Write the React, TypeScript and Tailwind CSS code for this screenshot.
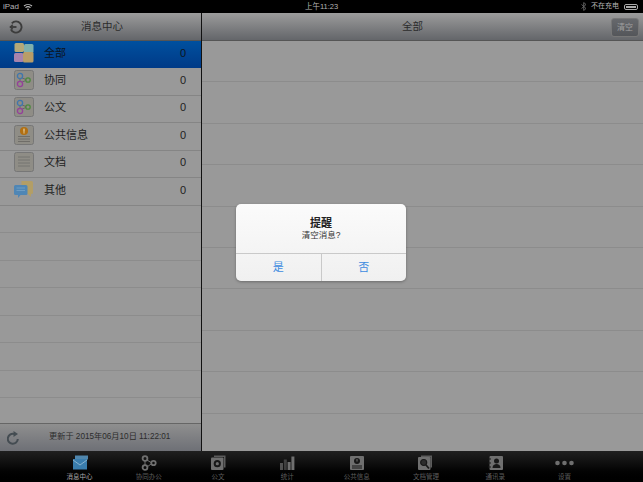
import type { ReactNode } from "react";

const cjk = { fontFamily: '"Liberation Sans", "Noto Sans CJK SC", sans-serif' };

function Frame({ children }: { children: ReactNode }) {
    return (
        <svg width="20" height="20" viewBox="0 0 20 20">
            <rect x="0.5" y="0.5" width="19" height="19" rx="2" fill="#8f8d86" stroke="#777" />
            {children}
        </svg>
    );
}

function FlowIcon() {
    return (
        <Frame>
            <path d="M6 7v6M6 7l7 3M6 13l7-3" stroke="#666" strokeWidth="1" fill="none" />
            <circle cx="6" cy="6" r="2.6" fill="#8f8d86" stroke="#3f76ad" strokeWidth="1.3" />
            <circle cx="6" cy="14" r="2.6" fill="#8f8d86" stroke="#94409a" strokeWidth="1.3" />
            <circle cx="14" cy="10" r="2.2" fill="#8f8d86" stroke="#4d8a3f" strokeWidth="1.3" />
        </Frame>
    );
}

function AllIcon() {
    return (
        <svg width="20" height="20" viewBox="0 0 20 20">
            <rect x="0.5" y="0" width="9.500" height="9" rx="1.500" fill="#b3a878" />
            <rect x="10" y="1" width="9.500" height="9" rx="1.500" fill="#7fb0ac" />
            <rect x="0" y="10" width="9.500" height="9" rx="1.500" fill="#a683ad" />
            <rect x="9" y="9" width="10.500" height="10.500" rx="1.500" fill="#b89d68" />
        </svg>
    );
}

function InfoIcon() {
    return (
        <Frame>
            <path d="M4 11.500h12M4 14h12M4 16.500h12" stroke="#6f6d68" />
            <circle cx="10" cy="6" r="4" fill="#b26f12" />
            <rect x="9.400" y="3.600" width="1.200" height="3.200" fill="#e6d3a8" />
            <rect x="9.400" y="7.300" width="1.200" height="1.100" fill="#e6d3a8" />
        </Frame>
    );
}

function DocIcon() {
    return (
        <Frame>
            <path d="M4 5h12M4 8h12M4 11h12M4 14h12" stroke="#747470" />
        </Frame>
    );
}

function OtherIcon() {
    return (
        <svg width="20" height="20" viewBox="0 0 20 20">
            <path d="M7.500 1h10a1.500 1.500 0 0 1 1.500 1.500v10a1.500 1.500 0 0 1-1.500 1.500h-.5v3l-3-3H7.500z" fill="#b39e66" />
            <path d="M1.500 5h10.500a1.500 1.500 0 0 1 1.500 1.500v7a1.500 1.500 0 0 1-1.500 1.500H6.500l-2.500 3v-3H1.500a1.500 1.500 0 0 1-1.500-1.500v-7A1.500 1.500 0 0 1 1.500 5z" fill="#4f86b5" />
            <path d="M2.500 8h8.500M2.500 10.500h8.500" stroke="#6f9dc3" />
        </svg>
    );
}

function Wifi() {
    return (
        <svg width="10" height="8" viewBox="0 0 10 8" fill="none" stroke="#bbb" strokeWidth="1.100">
            <path d="M1 3a6 6 0 0 1 8 0M2.500 4.700a3.700 3.700 0 0 1 5 0" />
            <path d="M5 7.500L3.800 6.100a1.800 1.800 0 0 1 2.400 0z" fill="#bbb" stroke="none" />
        </svg>
    );
}

function Bluetooth() {
    return (
        <svg width="6" height="9" viewBox="0 0 6 9" fill="none" stroke="#666" strokeWidth="0.900">
            <path d="M0.500 2.500l4.500 4-2.300 2V0.500l2.300 2-4.500 4" />
        </svg>
    );
}

function BackIcon() {
    return (
        <svg width="14" height="14" viewBox="0 0 15 15" fill="none" stroke="#3c3c3c" strokeWidth="2">
            <path d="M3 3.500A6 6 0 1 1 2 10" />
            <path d="M1 7.500h7" />
            <path d="M4 5L1.500 7.500 4 10" strokeWidth="1.600" />
        </svg>
    );
}

function RefreshIcon() {
    return (
        <svg width="13" height="14" viewBox="0 0 13 14" fill="none">
            <path d="M10.800 8A5 5 0 1 1 7 3" stroke="#444c52" strokeWidth="2" />
            <path d="M6.500 0l4.500 3-4.500 3z" fill="#444c52" />
        </svg>
    );
}

const gray = "#6f6f6f";

const tabs: { label: string; icon: ReactNode; active?: boolean }[] = [
    {
        label: "消息中心",
        active: true,
        icon: (
            <svg width="15" height="15" viewBox="0 0 15 15" className="ml-[2px]">
                <path d="M2 0.500h13v4H2z" fill="#4f86ad" />
                <rect x="0" y="4" width="14" height="10.500" fill="#3a7dad" />
                <path d="M0 5l7 5 7-5" fill="none" stroke="#9cc0d8" strokeWidth="0.800" />
            </svg>
        ),
    },
    {
        label: "协同办公",
        icon: (
            <svg width="16" height="16" viewBox="0 0 16 16" fill="none" stroke={gray} strokeWidth="1.800">
                <path d="M4 6v4M6 5l4 2.500M6 12l4-3" strokeWidth="1" />
                <circle cx="4" cy="3.500" r="2.400" />
                <circle cx="4" cy="12.500" r="2.400" />
                <circle cx="12.500" cy="8" r="2.200" />
            </svg>
        ),
    },
    {
        label: "公文",
        icon: (
            <svg width="15" height="15" viewBox="0 0 15 15">
                <path d="M3 0.500h11.500v12h-1.500v-10.500H3z" fill="#5c5c5c" />
                <rect x="0" y="2.500" width="12.500" height="12.500" rx="1" fill={gray} />
                <circle cx="6.300" cy="8.700" r="3.600" fill="#181818" />
                <circle cx="6.300" cy="8.700" r="1.600" fill={gray} />
            </svg>
        ),
    },
    {
        label: "统计",
        icon: (
            <svg width="15" height="14" viewBox="0 0 15 14" fill={gray}>
                <rect x="0" y="7" width="3" height="7" opacity="0.700" />
                <rect x="3.800" y="3.500" width="3" height="10.500" opacity="0.500" />
                <rect x="7.600" y="6" width="3" height="8" />
                <rect x="11.400" y="0.500" width="3" height="13.500" />
            </svg>
        ),
    },
    {
        label: "公共信息",
        icon: (
            <svg width="14" height="14" viewBox="0 0 14 14">
                <rect x="0" y="0" width="14" height="14" rx="1" fill={gray} />
                <circle cx="7" cy="5" r="3" fill="#181818" />
                <rect x="6.500" y="3" width="1" height="2.500" fill={gray} />
                <path d="M2 10h10M2 12h10" stroke="#181818" />
            </svg>
        ),
    },
    {
        label: "文档管理",
        icon: (
            <svg width="15" height="15" viewBox="0 0 15 15">
                <path d="M3 0.500h11v12h-1.500v-10.500H3z" fill="#5c5c5c" />
                <rect x="0" y="2" width="12.500" height="13" rx="1" fill={gray} />
                <circle cx="5.700" cy="7.500" r="3" fill="#2c2c2c" stroke="#181818" strokeWidth="1.200" />
                <path d="M8 10l3 3.500" stroke="#181818" strokeWidth="1.800" />
            </svg>
        ),
    },
    {
        label: "通讯录",
        icon: (
            <svg width="15" height="14" viewBox="0 0 15 14">
                <rect x="1.500" y="0" width="13.500" height="14" rx="1" fill={gray} />
                <path d="M0 3h3M0 7h3M0 11h3" stroke="#181818" strokeWidth="1" />
                <circle cx="8.500" cy="5" r="2.500" fill="#181818" />
                <path d="M4.500 12c0-3 2-4 4-4s4 1 4 4z" fill="#181818" />
            </svg>
        ),
    },
    {
        label: "设置",
        icon: (
            <svg width="19" height="6" viewBox="0 0 19 6" fill={gray}>
                <circle cx="2.500" cy="3" r="2.300" />
                <circle cx="9.500" cy="3" r="2.300" />
                <circle cx="16.500" cy="3" r="2.300" />
            </svg>
        ),
    },
];

const rows = [
    { name: "全部", icon: <AllIcon />, active: true },
    { name: "协同", icon: <FlowIcon /> },
    { name: "公文", icon: <FlowIcon /> },
    { name: "公共信息", icon: <InfoIcon /> },
    { name: "文档", icon: <DocIcon /> },
    { name: "其他", icon: <OtherIcon /> },
];

export default function App() {
    return (
        <div className="relative flex flex-col w-[643px] h-[482px] overflow-hidden bg-[#999999]" style={cjk}>
            <div className="flex items-center justify-between h-[13px] px-[3px] bg-black text-[#b5b5b5] text-[8px] shrink-0">
                <div className="flex items-center gap-[4px] w-[200px]">
                    <span>iPad</span>
                    <Wifi />
                </div>
                <span className="text-[7.500px]">上午11:23</span>
                <div className="flex items-center justify-end gap-[4px] w-[200px]">
                    <Bluetooth />
                    <span className="text-[7px]">不在充电</span>
                    <div className="w-[14px] h-[6px] rounded-[2px] border border-[#aaa] p-[1px] ml-[1px] mr-[2px]">
                        <div className="h-full w-full bg-[#aaa]" />
                    </div>
                </div>
            </div>

            <div className="flex flex-1 min-h-0">
                <div className="flex flex-col w-[201px] shrink-0">
                    <div className="relative flex items-center justify-center h-[28px] pl-[3px] border-b border-[#555] bg-gradient-to-b from-[#9c9c9c] to-[#64666a] text-[10.500px] text-[#2c2c2c] shrink-0">
                        <span className="absolute left-[9px] top-[7px] flex">
                            <BackIcon />
                        </span>
                        消息中心
                    </div>
                    <div className="flex-1 min-h-0 overflow-hidden">
                        {rows.map((r) => (
                            <div
                                key={r.name}
                                className={
                                    r.active
                                        ? "flex items-center h-[27px] pb-[3px] pl-[14px] pr-[15px] bg-gradient-to-b from-[#00509f] to-[#003a87] text-[#0c1420] text-[11px]"
                                        : "flex items-center h-[27.5px] pb-[3px] pl-[14px] pr-[15px] border-b border-[#858585] text-[#222222] text-[11px]"
                                }
                            >
                                <span className="flex w-[30px] shrink-0">{r.icon}</span>
                                <span className="flex-1">{r.name}</span>
                                <span className="text-[11px]">0</span>
                            </div>
                        ))}
                        {Array.from({ length: 8 }).map((_, i) => (
                            <div key={i} className="h-[27.5px] border-b border-[#8c8c8c]" />
                        ))}
                    </div>
                    <div className="flex items-center h-[28px] border-t border-[#666] bg-gradient-to-b from-[#8f8f8f] to-[#6e7076] text-[8.200px] text-[#2c2c2c] shrink-0">
                        <span className="flex ml-[7px] w-[42px]">
                            <RefreshIcon />
                        </span>
                        更新于 2015年06月10日 11:22:01
                    </div>
                </div>

                <div className="w-px bg-[#111] shrink-0" />

                <div className="flex flex-col flex-1 min-w-0">
                    <div className="relative flex items-center justify-center h-[28px] pr-[20px] border-b border-[#555] bg-gradient-to-b from-[#9c9c9c] to-[#64666a] text-[10.500px] text-[#2c2c2c] shrink-0">
                        全部
                        <span className="absolute right-[4px] top-[5px] flex items-center justify-center w-[28px] h-[19px] rounded-[3px] border border-[#777] bg-gradient-to-b from-[#66686c] to-[#54565a] text-[8px] text-[#a0a0a0]">
                            清空
                        </span>
                    </div>
                    <div className="flex-1 min-h-0 overflow-hidden">
                        {Array.from({ length: 10 }).map((_, i) => (
                            <div key={i} className="h-[41.4px] border-b border-[#8c8c8c]" />
                        ))}
                    </div>
                </div>
            </div>

            <div className="flex justify-center h-[31px] pl-[1px] bg-gradient-to-b from-[#202020] via-[#0a0a0a] to-black shrink-0">
                {tabs.map((t) => (
                    <div key={t.label} className="flex flex-col items-center w-[69.300px]">
                        <div className="flex items-center justify-center h-[22px] pt-[1px]">{t.icon}</div>
                        <span className={t.active ? "text-[6.500px] leading-[8px] text-[#a9a9a9]" : "text-[6.500px] leading-[8px] text-[#5c5c5c]"}>
                            {t.label}
                        </span>
                    </div>
                ))}
            </div>

            <div className="absolute left-[236px] top-[204px] flex flex-col w-[170px] h-[77px] rounded-[5px] bg-gradient-to-b from-[#fbfbfb] to-[#f0f0f0] overflow-hidden shadow-[0_1px_3px_rgba(0,0,0,0.3)]">
                <div className="flex flex-col items-center h-[50px] pt-[12px] border-b border-[#c9c9c9]">
                    <span className="text-[11px] leading-[14px] font-bold text-[#222]">提醒</span>
                    <span className="text-[8.500px] leading-[11px] text-[#333]">清空消息?</span>
                </div>
                <div className="flex flex-1 text-[11px] text-[#3d8be0]">
                    <div className="flex flex-1 items-center justify-center border-r border-[#c9c9c9]">是</div>
                    <div className="flex flex-1 items-center justify-center">否</div>
                </div>
            </div>
        </div>
    );
}
